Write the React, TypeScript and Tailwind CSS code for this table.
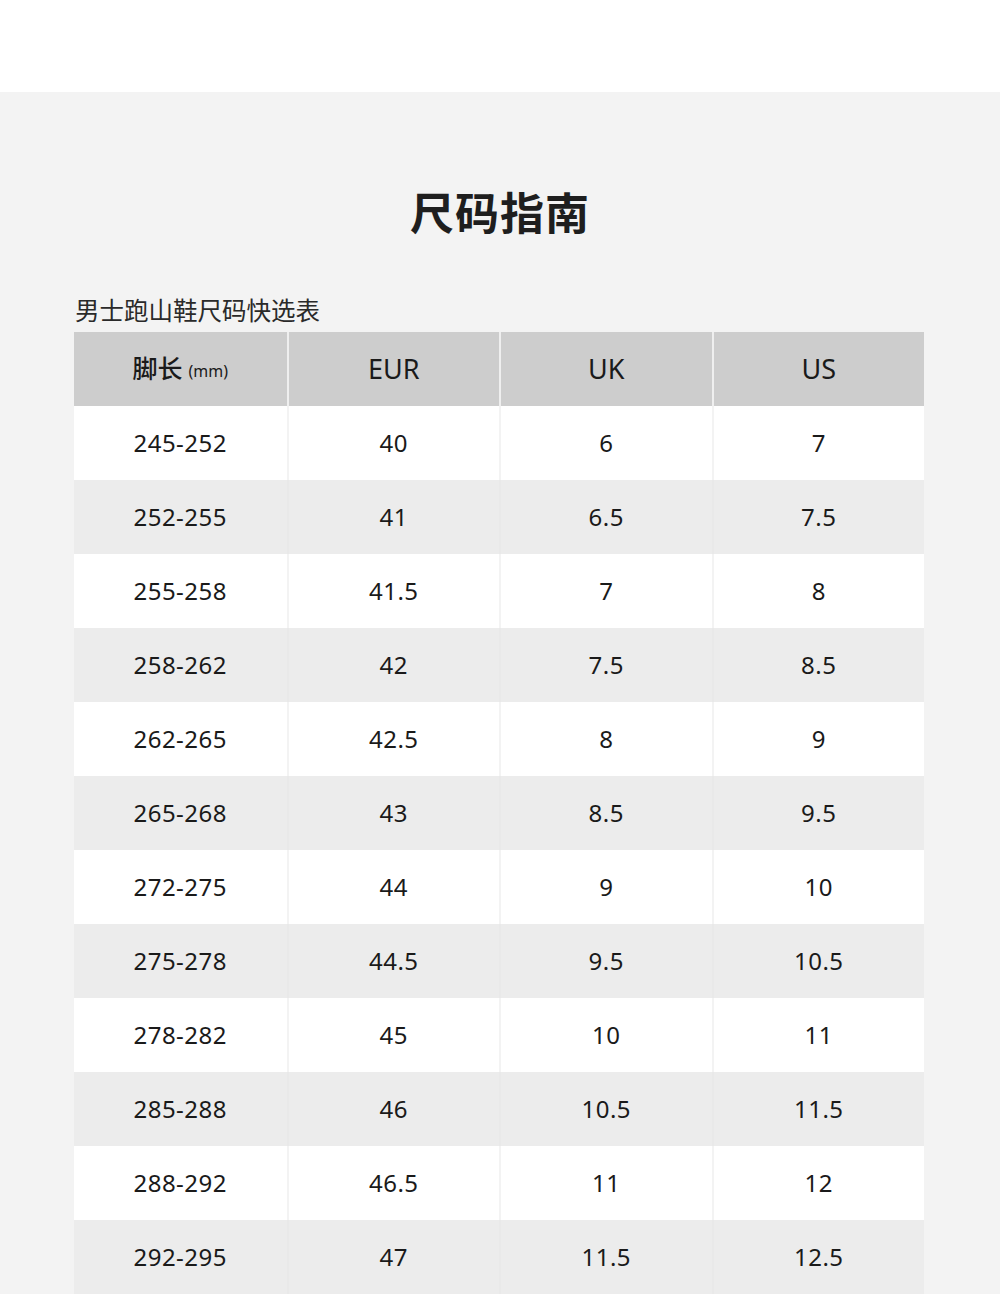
const rows = [
  ["245-252", "40", "6", "7"],
  ["252-255", "41", "6.5", "7.5"],
  ["255-258", "41.5", "7", "8"],
  ["258-262", "42", "7.5", "8.5"],
  ["262-265", "42.5", "8", "9"],
  ["265-268", "43", "8.5", "9.5"],
  ["272-275", "44", "9", "10"],
  ["275-278", "44.5", "9.5", "10.5"],
  ["278-282", "45", "10", "11"],
  ["285-288", "46", "10.5", "11.5"],
  ["288-292", "46.5", "11", "12"],
  ["292-295", "47", "11.5", "12.5"],
];

const font = { fontFamily: '"Noto Sans", "Noto Sans CJK SC", sans-serif' };

export default function App() {
  return (
    <div className="w-[1000px] h-[1294px] overflow-hidden bg-[#f3f3f3]" style={font}>
      <div className="h-[92px] bg-white" />
      <h1 className="mt-[93px] text-center text-[44px] leading-[56px] font-bold text-[#1e1e1e] tracking-[1px]">
        尺码指南
      </h1>
      <div className="mx-[74px] mt-[54px]">
        <div className="text-[24.5px] leading-[32px] text-[#2a2a2a] pl-[1px]">男士跑山鞋尺码快选表</div>
        <div className="mt-[5px] w-[850px]">
          <div className="grid grid-cols-4 h-[74px] bg-[#cdcdcd] text-[#1a1a1a]">
            <div className="flex items-center justify-center gap-[6px]">
              <span className="text-[25px] font-medium">脚长</span>
              <span className="text-[16px] mt-[4px]">(mm)</span>
            </div>
            {["EUR", "UK", "US"].map((h) => (
              <div key={h} className="flex items-center justify-center border-l-2 border-[#efefef] text-[27px]">
                {h}
              </div>
            ))}
          </div>
          {rows.map((r, i) => (
            <div
              key={r[0]}
              className={
                "grid grid-cols-4 h-[74px] text-[24px] text-[#1a1a1a] " +
                (i % 2 === 0 ? "bg-white" : "bg-[#ececec]")
              }
            >
              {r.map((c, j) => (
                <div
                  key={j}
                  className={
                    "flex items-center justify-center tracking-[0.5px] " +
                    (j > 0 ? (i % 2 === 0 ? "border-l-2 border-[#f3f3f3]" : "border-l-2 border-[#e9e9e9]") : "")
                  }
                >
                  {c}
                </div>
              ))}
            </div>
          ))}
        </div>
      </div>
    </div>
  );
}
